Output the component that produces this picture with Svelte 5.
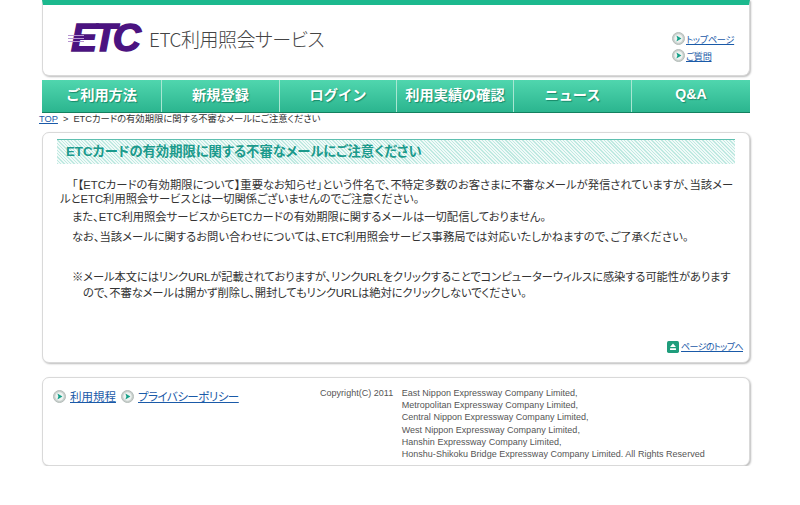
<script lang="ts">
	const navItems = ['ご利用方法', '新規登録', 'ログイン', '利用実績の確認', 'ニュース', 'Q&A'];
	const companies = [
		'East Nippon Expressway Company Limited,',
		'Metropolitan Expressway Company Limited,',
		'Central Nippon Expressway Company Limited,',
		'West Nippon Expressway Company Limited,',
		'Hanshin Expressway Company Limited,',
		'Honshu-Shikoku Bridge Expressway Company Limited. All Rights Reserved'
	];
</script>

{#snippet bullet()}
	<svg class="bullet" width="13" height="13" viewBox="0 0 13 13" aria-hidden="true">
		<circle cx="6.5" cy="6.5" r="6" fill="#c9d0cd" stroke="#b4bcb9" />
		<circle cx="6.5" cy="6.5" r="4.2" fill="#eef2f0" />
		<path d="M4.4 3.6 L9.4 6.5 L4.4 9.4 L5.4 6.5 Z" fill="#14a088" />
	</svg>
{/snippet}

<div class="page">
	<header class="card header">
		<div class="brand">
			<div class="logo">
				<span class="logo-text">ETC</span>
				<span class="stripes"><i></i><i></i><i></i></span>
			</div>
			<span class="service">ETC利用照会サービス</span>
		</div>
		<ul class="util">
			<li>{@render bullet()}<a href="#top">トップページ</a></li>
			<li>{@render bullet()}<a href="#faq">ご質問</a></li>
		</ul>
	</header>

	<nav class="nav">
		{#each navItems as item}
			<a href="#nav">{item}</a>
		{/each}
	</nav>

	<div class="crumb"><a href="#top">TOP</a><span class="gt">&gt;</span>ETCカードの有効期限に関する不審なメールにご注意ください</div>

	<main class="card main">
		<h1>ETCカードの有効期限に関する不審なメールにご注意ください</h1>
		<div class="body">
			<p class="first">「【ETCカードの有効期限について】重要なお知らせ」という件名で、不特定多数のお客さまに不審なメールが発信されていますが、当該メー<br />ルとETC利用照会サービスとは一切関係ございませんのでご注意ください。</p>
			<p class="line">また、ETC利用照会サービスからETCカードの有効期限に関するメールは一切配信しておりません。</p>
			<p class="line">なお、当該メールに関するお問い合わせについては、ETC利用照会サービス事務局では対応いたしかねますので、ご了承ください。</p>
			<p class="note">※メール本文にはリンクURLが記載されておりますが、リンクURLをクリックすることでコンピューターウィルスに感染する可能性がありますので、不審なメールは開かず削除し、開封してもリンクURLは絶対にクリックしないでください。</p>
		</div>
		<div class="pagetop">
			<svg width="12" height="12" viewBox="0 0 11 11" aria-hidden="true">
				<rect width="11" height="11" rx="1.5" fill="#1f9d7c" />
				<path d="M5.5 2.4 L8.2 5.4 H2.8 Z M2.8 6.6 H8.2 V8.2 H2.8 Z" fill="#fff" />
			</svg>
			<a href="#top">ページのトップへ</a>
		</div>
	</main>

	<footer class="card footer">
		<div class="links">
			{@render bullet()}<a href="#terms">利用規程</a>
			{@render bullet()}<a class="narrow" href="#privacy">プライバシーポリシー</a>
		</div>
		<div class="copy">
			<span class="year">Copyright(C) 2011</span>
			<div>
				{#each companies as name}
					<div>{name}</div>
				{/each}
			</div>
		</div>
	</footer>
</div>

<style>
	:global(body) {
		margin: 0;
		background: #fff;
		font-family: "Liberation Sans", "Noto Sans CJK JP", sans-serif;
		color: #333;
		font-feature-settings: "palt";
	}

	.page {
		width: 708px;
		margin-left: 42px;
	}

	.card {
		background: #fff;
		border: 1px solid #d9d9d9;
		border-radius: 7px;
		box-shadow: 1px 1px 2px #bbb;
		box-sizing: border-box;
	}

	.header {
		height: 76px;
		border-top: 5px solid #1cb98e;
		border-radius: 0 0 7px 7px;
		display: flex;
		justify-content: space-between;
	}

	.brand {
		display: flex;
		align-items: center;
		gap: 9px;
		padding: 0 0 4px 25px;
	}

	.logo {
		position: relative;
		width: 72px;
		height: 30px;
	}

	.logo-text {
		position: absolute;
		left: 3px;
		top: -5px;
		font: italic 900 39px/40px "Liberation Sans", sans-serif;
		color: #4b1380;
		-webkit-text-stroke: 1.4px #4b1380;
		letter-spacing: -4px;
	}

	.stripes {
		position: absolute;
		left: 0;
		top: 12px;
		display: flex;
		flex-direction: column;
		gap: 2px;
	}

	.stripes i {
		display: block;
		width: 16px;
		height: 1px;
		background: #b795d0;
	}

	.service {
		font-size: 19px;
		color: #444;
		letter-spacing: -0.5px;
		font-family: "Noto Sans CJK JP", sans-serif;
		font-weight: 300;
	}

	.util {
		list-style: none;
		margin: 0;
		padding: 25px 15px 0 0;
		width: 62px;
		font-size: 9.2px;
		letter-spacing: -0.3px;
	}

	.util li {
		display: flex;
		align-items: center;
		gap: 1px;
		height: 17px;
		white-space: nowrap;
	}

	a {
		color: #1a5aa8;
		text-decoration: underline;
	}

	.bullet {
		flex: none;
	}

	.nav {
		display: grid;
		grid-template-columns: 120px 118px 117px 117px 118px 1fr;
		height: 33px;
		margin-top: 4px;
		background: linear-gradient(#50d6ae, #2bb58f);
		border-bottom: 1px solid #14805f;
		box-sizing: border-box;
	}

	.nav a {
		display: flex;
		align-items: center;
		justify-content: center;
		padding-bottom: 4px;
		color: #fff;
		text-decoration: none;
		font-size: 14.2px;
		font-weight: 700;
		border-right: 1px solid #a9e6d2;
		text-shadow: 1px 1px 1px #1a8a6a;
		font-feature-settings: normal;
	}

	.nav a:last-child {
		border-right: 0;
	}

	.crumb {
		margin-left: -3px;
		height: 19px;
		box-sizing: border-box;
		font-size: 9.3px;
		line-height: 13px;
		white-space: nowrap;
	}

	.crumb .gt {
		margin: 0 5px;
	}

	.main {
		height: 231px;
		padding: 6px 14px 0 14px;
		display: flex;
		flex-direction: column;
	}

	h1 {
		margin: 0;
		height: 25px;
		line-height: 24px;
		padding-left: 9px;
		box-sizing: border-box;
		font-size: 13.3px;
		font-weight: 700;
		color: #1b9a8c;
		border-top: 1px solid #5fc0b0;
		background: repeating-linear-gradient(45deg, #bfe9e1 0 1px, #f0faf8 1px 2.4px);
	}

	.body {
		font-size: 11.3px;
		color: #333;
	}

	.body p {
		margin: 0;
	}

	.first {
		margin-top: 14px !important;
		margin-bottom: 1px !important;
		line-height: 14px;
		padding-left: 3px;
		text-indent: 12px;
	}

	.line {
		line-height: 20px;
		padding-left: 15px;
	}

	.note {
		margin: 22px -4px 0 15px !important;
		line-height: 16px;
		padding-left: 11px;
		text-indent: -11px;
		letter-spacing: -0.1px;
	}

	.pagetop {
		margin-top: auto;
		margin-bottom: 9px;
		margin-right: -8px;
		display: flex;
		justify-content: flex-end;
		align-items: center;
		gap: 2px;
		font-size: 9px;
		letter-spacing: -0.6px;
	}

	.footer {
		margin-top: 14px;
		height: 89px;
		display: flex;
		padding: 10px 0 0 10px;
	}

	.links {
		width: 267px;
		display: flex;
		align-items: flex-start;
		gap: 4px;
		font-size: 11.5px;
	}

	.links a {
		margin-right: 1px;
	}

	.links .bullet {
		margin-top: 2px;
	}

	.links .narrow {
		letter-spacing: -0.5px;
	}

	.copy {
		display: flex;
		gap: 8.5px;
		margin-top: -1px;
		font-size: 9px;
		letter-spacing: 0.02px;
		line-height: 12.2px;
		color: #555;
		white-space: nowrap;
	}
</style>
